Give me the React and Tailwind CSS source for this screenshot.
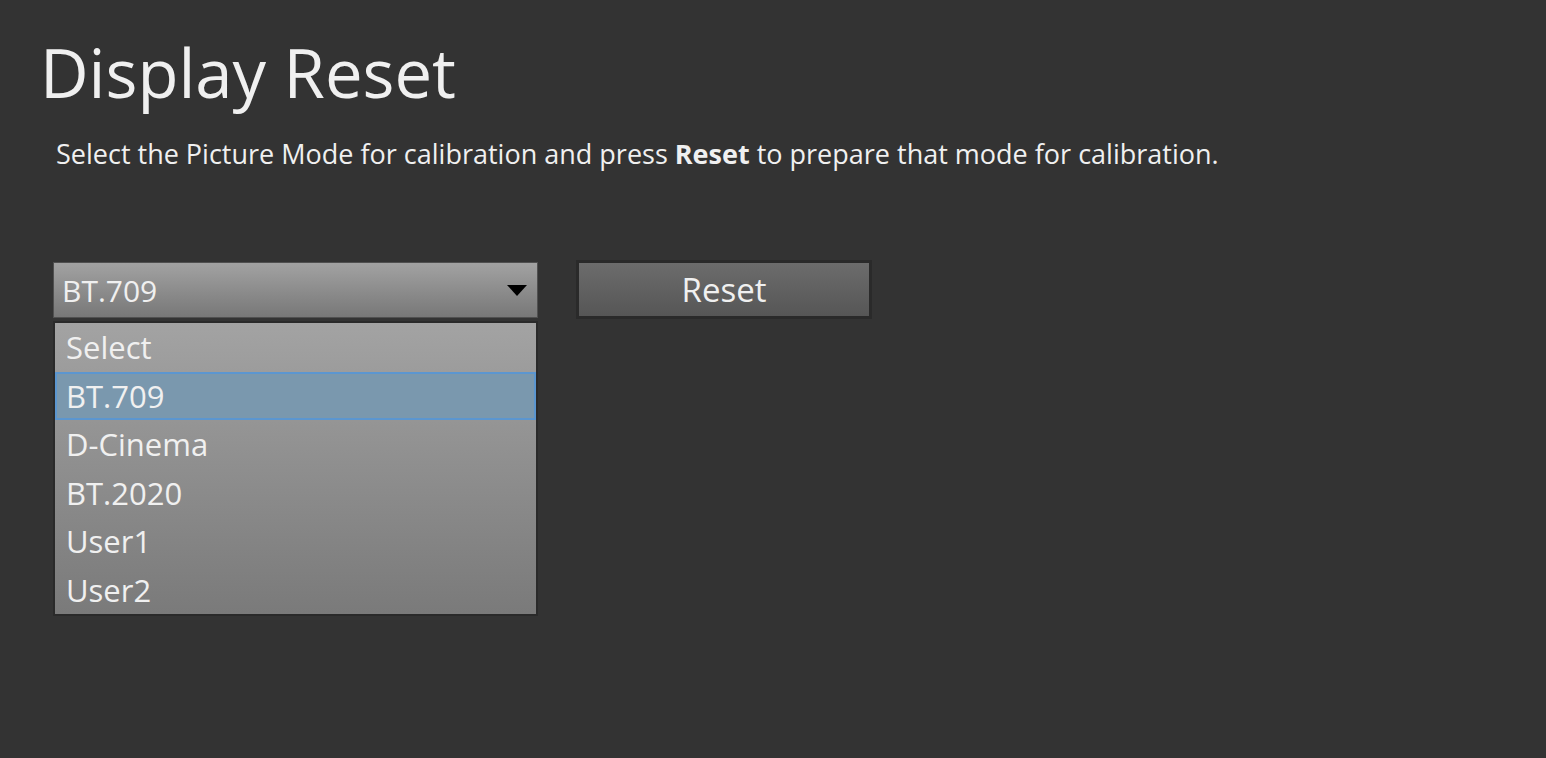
const options = ['Select', 'BT.709', 'D-Cinema', 'BT.2020', 'User1', 'User2']

export default function App() {
  const selected = 'BT.709'
  return (
    <div className="w-[1546px] h-[758px] bg-[#333333] text-[#f0f0f0] overflow-hidden" style={{ fontFamily: '"Open Sans", "Noto Sans", sans-serif' }}>
      <div className="pl-[40px] pt-[28px]">
        <h1 className="text-[67px] leading-[88px]">Display Reset</h1>
        <p className="ml-[16px] mt-[21px] text-[27px] leading-[34px]">
          Select the Picture Mode for calibration and press <b className="font-bold">Reset</b> to prepare that mode for calibration.
        </p>
      </div>
      <div className="flex items-start gap-[38px] pl-[53px] mt-[91px]">
        <div className="w-[485px]">
          <div className="h-[56px] flex items-center justify-between pl-[8px] pr-[10px] border border-[#505050] bg-linear-to-b from-[#a2a2a2] to-[#787878]">
            <span className="text-[30px]">{selected}</span>
            <svg width="20" height="11" viewBox="0 0 20 11"><path d="M0 0h20L10 11z" fill="#000" /></svg>
          </div>
          <ul className="mt-[3px] border-2 border-[#2a2a2a] bg-linear-to-b from-[#a3a3a3] to-[#7a7a7a]">
            {options.map(o => (
              <li key={o} className={'h-[48.5px] flex items-center text-[31px] pl-[9px] border-2 ' + (o === selected ? 'bg-[#7a98ae] border-[#5b96d0]' : 'border-transparent')}>
                {o}
              </li>
            ))}
          </ul>
        </div>
        <button className="-mt-[2px] w-[296px] h-[59px] border-[3px] border-[#2a2a2a] bg-linear-to-b from-[#6c6c6c] to-[#565656] text-[33px] text-[#f0f0f0]">
          Reset
        </button>
      </div>
    </div>
  )
}
